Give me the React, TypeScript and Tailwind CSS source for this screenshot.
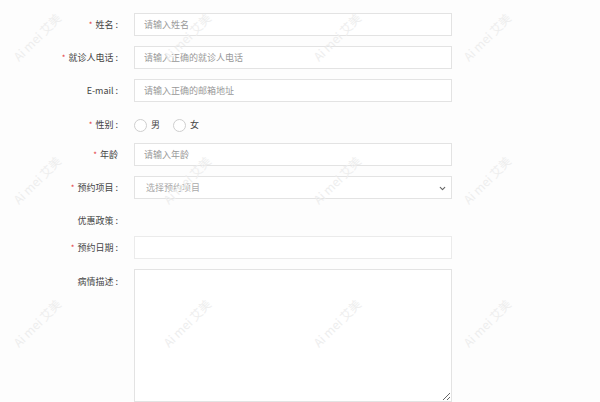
import { ChevronDown } from 'lucide-react';
import type { ReactNode } from 'react';

const FONT = '"Noto Sans CJK SC", "Noto Sans", sans-serif';

function Label({ text, required, colon = true }: { text: string; required?: boolean; colon?: boolean }) {
  return (
    <div className="w-[120px] shrink-0 flex justify-end items-center pr-[2px] text-[9px] text-[#444]">
      {required && <span className="text-[#e4393c] mr-[3px] text-[8px]">*</span>}
      <span>{text}</span>
      {colon && <span className="ml-[2px]">:</span>}
    </div>
  );
}

function Row({ children, className = '' }: { children: ReactNode; className?: string }) {
  return <div className={`flex items-center gap-[14px] ${className}`}>{children}</div>;
}

function TextInput({ placeholder }: { placeholder?: string }) {
  return (
    <input
      type="text"
      placeholder={placeholder}
      className="w-[318px] h-[23px] border border-[#e3e3e3] bg-white px-[9px] text-[9px] text-[#444] placeholder:text-[#999] outline-none"
      style={{ fontFamily: FONT }}
    />
  );
}

function Radio({ label }: { label: string }) {
  return (
    <label className="flex items-center gap-[4px] mr-[13px]">
      <span className="w-[13px] h-[13px] rounded-full border border-[#cfcfcf] bg-white" />
      <span className="text-[9px] text-[#444]">{label}</span>
    </label>
  );
}

const MARKS = [37, 180, 323].flatMap(y => [37, 187, 337, 487].map(x => ({ x, y })));

export default function App() {
  return (
    <div className="relative w-[600px] h-[402px] overflow-hidden bg-[#fdfdfd]" style={{ fontFamily: FONT }}>
      <div className="flex flex-col pt-[13px]">
        <Row>
          <Label text="姓名" required />
          <TextInput placeholder="请输入姓名" />
        </Row>
        <Row className="mt-[10px]">
          <Label text="就诊人电话" required />
          <TextInput placeholder="请输入正确的就诊人电话" />
        </Row>
        <Row className="mt-[10px]">
          <Label text="E-mail" />
          <TextInput placeholder="请输入正确的邮箱地址" />
        </Row>
        <Row className="mt-[10px] h-[26px]">
          <Label text="性别" required />
          <div className="flex items-center">
            <Radio label="男" />
            <Radio label="女" />
          </div>
        </Row>
        <Row className="mt-[5px]">
          <Label text="年龄" required colon={false} />
          <TextInput placeholder="请输入年龄" />
        </Row>
        <Row className="mt-[10px]">
          <Label text="预约项目" required />
          <div className="relative w-[318px] h-[23px] border border-[#e3e3e3] bg-white flex items-center px-[11px] text-[9px] text-[#aaa]">
            <span>选择预约项目</span>
            <ChevronDown className="absolute right-[4px] top-[7px] text-[#666]" size={9} strokeWidth={3} />
          </div>
        </Row>
        <Row className="mt-[10px] h-[23px]">
          <Label text="优惠政策" />
        </Row>
        <Row className="mt-[4px]">
          <Label text="预约日期" required />
          <div className="w-[318px] h-[23px] border border-[#ebebeb] bg-white" />
        </Row>
        <div className="flex gap-[14px] mt-[10px]">
          <div className="pt-[6px]">
            <Label text="病情描述" />
          </div>
          <textarea
            className="w-[318px] h-[133px] border border-[#e3e3e3] bg-white outline-none"
          />
        </div>
      </div>

      {/* watermark */}
      <div className="pointer-events-none absolute inset-0">
        {MARKS.map((m, i) => (
          <span
            key={i}
            className="absolute w-[80px] text-center text-[12px] leading-[14px] whitespace-nowrap text-[#eeeeee] -rotate-45"
            style={{ left: m.x - 40, top: m.y - 7 }}
          >
            Ai mei 艾美
          </span>
        ))}
      </div>
    </div>
  );
}
